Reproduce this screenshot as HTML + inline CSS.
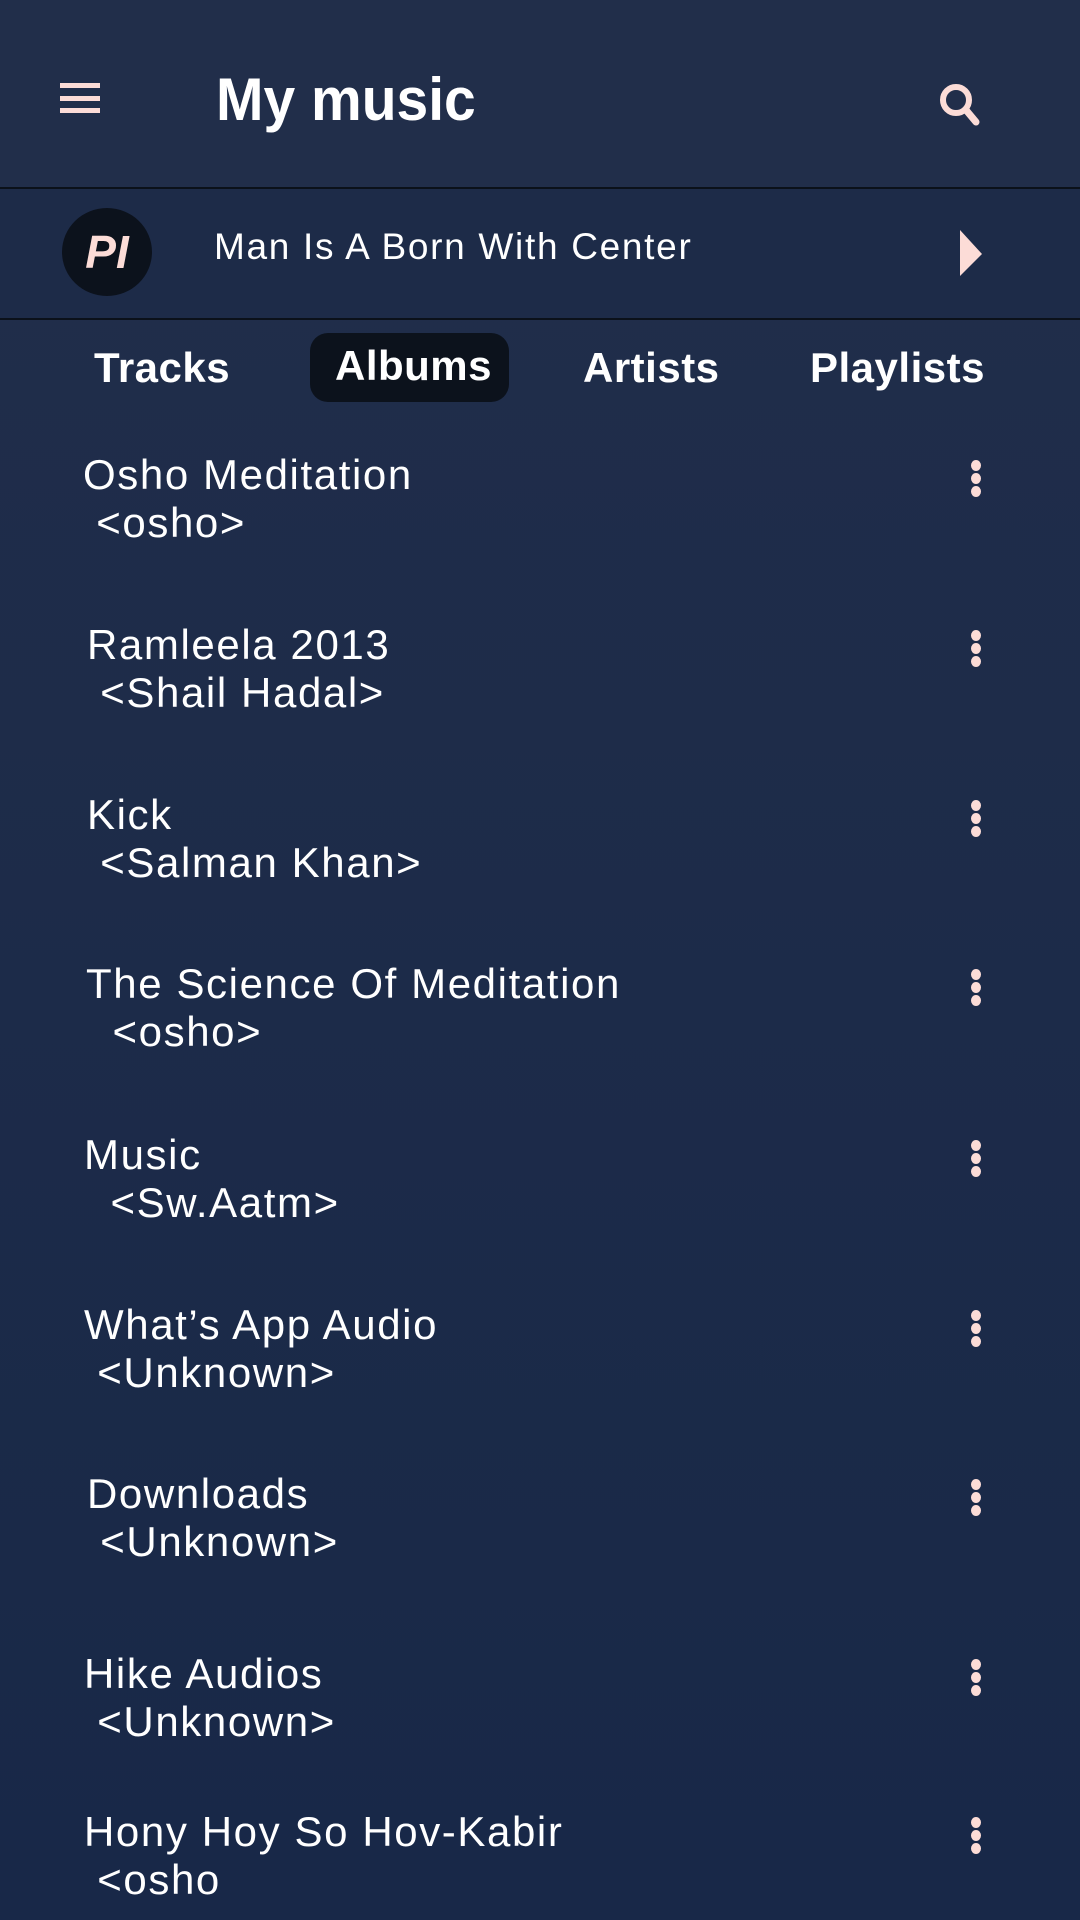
<!DOCTYPE html>
<html><head><meta charset="utf-8"><style>
*{margin:0;padding:0;box-sizing:border-box}
body{width:1080px;height:1920px;overflow:hidden;background:linear-gradient(#212e4a,#182848);font-family:"Liberation Sans",sans-serif;color:#fff;position:relative}
.a{position:absolute;white-space:pre}
.t{font-size:42px;line-height:48px;letter-spacing:1.6px}
.dots{position:absolute;left:971px;width:11px}
.dots i{display:block;width:10px;height:11px;border-radius:50%;background:#fcdcd7;margin-bottom:2px}
.tab{font-size:42px;font-weight:bold;line-height:48px;letter-spacing:0.5px}
</style></head><body>
<div style="position:absolute;left:0;top:0;width:1080px;height:187px;background:#212e4a"></div>
<div style="position:absolute;left:0;top:187px;width:1080px;height:2px;background:#0b111a"></div>
<div style="position:absolute;left:0;top:189px;width:1080px;height:129px;background:#1d2b48"></div>
<div style="position:absolute;left:0;top:318px;width:1080px;height:2px;background:#0b111a"></div>
<div style="position:absolute;left:60px;top:83px;width:40px;height:5px;background:#fcdcd7"></div>
<div style="position:absolute;left:60px;top:96px;width:40px;height:5px;background:#fcdcd7"></div>
<div style="position:absolute;left:60px;top:108px;width:40px;height:5px;background:#fcdcd7"></div>
<div class="a" style="left:216px;top:64px;font-size:60px;font-weight:bold;line-height:72px;transform:scaleX(0.95);transform-origin:left">My music</div>
<svg style="position:absolute;left:936px;top:80px" width="48" height="48" viewBox="0 0 48 48"><circle cx="20" cy="20" r="13" fill="none" stroke="#fcdcd7" stroke-width="6"/><line x1="30" y1="30" x2="40" y2="42" stroke="#fcdcd7" stroke-width="7" stroke-linecap="round"/></svg>
<div style="position:absolute;left:62px;top:208px;width:90px;height:88px;border-radius:50%;background:#0c121c"></div>
<div class="a" style="left:62px;top:228px;width:90px;text-align:center;font-size:46px;font-weight:bold;font-style:italic;color:#fcdcd7;line-height:48px">PI</div>
<div class="a" style="left:214px;top:226px;font-size:37px;line-height:42px;letter-spacing:1.7px">Man Is A Born With Center</div>
<svg style="position:absolute;left:960px;top:230px" width="24" height="48"><polygon points="0,0 22,24 0,46" fill="#fcdcd7"/></svg>
<div style="position:absolute;left:310px;top:333px;width:199px;height:69px;border-radius:18px;background:#0c121c"></div>
<div class="a tab" style="left:94px;top:344px">Tracks</div>
<div class="a tab" style="left:335px;top:342px">Albums</div>
<div class="a tab" style="left:583px;top:344px">Artists</div>
<div class="a tab" style="left:810px;top:344px">Playlists</div>
<div class="a t" style="left:83px;top:451px">Osho Meditation</div><div class="a t" style="left:83px;top:499px"> &lt;osho&gt;</div><div class="dots" style="top:460px"><i></i><i></i><i></i></div>
<div class="a t" style="left:87px;top:621px">Ramleela 2013</div><div class="a t" style="left:87px;top:669px"> &lt;Shail Hadal&gt;</div><div class="dots" style="top:630px"><i></i><i></i><i></i></div>
<div class="a t" style="left:87px;top:791px">Kick</div><div class="a t" style="left:87px;top:839px"> &lt;Salman Khan&gt;</div><div class="dots" style="top:800px"><i></i><i></i><i></i></div>
<div class="a t" style="left:86px;top:960px">The Science Of Meditation</div><div class="a t" style="left:86px;top:1008px">  &lt;osho&gt;</div><div class="dots" style="top:969px"><i></i><i></i><i></i></div>
<div class="a t" style="left:84px;top:1131px">Music</div><div class="a t" style="left:84px;top:1179px">  &lt;Sw.Aatm&gt;</div><div class="dots" style="top:1140px"><i></i><i></i><i></i></div>
<div class="a t" style="left:84px;top:1301px">What’s App Audio</div><div class="a t" style="left:84px;top:1349px"> &lt;Unknown&gt;</div><div class="dots" style="top:1310px"><i></i><i></i><i></i></div>
<div class="a t" style="left:87px;top:1470px">Downloads</div><div class="a t" style="left:87px;top:1518px"> &lt;Unknown&gt;</div><div class="dots" style="top:1479px"><i></i><i></i><i></i></div>
<div class="a t" style="left:84px;top:1650px">Hike Audios</div><div class="a t" style="left:84px;top:1698px"> &lt;Unknown&gt;</div><div class="dots" style="top:1659px"><i></i><i></i><i></i></div>
<div class="a t" style="left:84px;top:1808px">Hony Hoy So Hov-Kabir</div><div class="a t" style="left:84px;top:1856px"> &lt;osho</div><div class="dots" style="top:1817px"><i></i><i></i><i></i></div>
</body></html>
